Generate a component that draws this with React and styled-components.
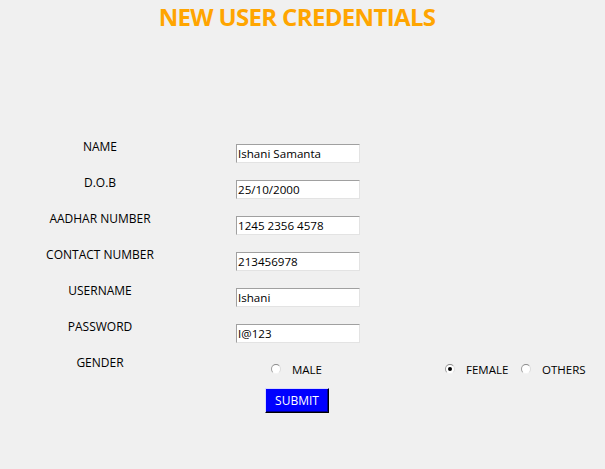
import React from 'react';
import styled, { createGlobalStyle } from 'styled-components'

const GlobalStyle = createGlobalStyle`
  body {
    margin: 0;
    background: #f0f0f0;
    font-family: "Open Sans", "Noto Sans", sans-serif;
  }
`

const Window = styled.div`
  width: 605px;
  height: 469px;
  background: #f0f0f0;
  overflow: hidden;
`

const Title = styled.h1`
  margin: 0;
  padding: 5px 11px 0 0;
  text-align: center;
  color: #ffa500;
  font-size: 24px;
  line-height: 24px;
  font-weight: 700;
  letter-spacing: -0.65px;
`

const Form = styled.div`
  display: grid;
  grid-template-columns: 200px 1fr;
  grid-template-rows: repeat(6, 36px) 33px auto;
  column-gap: 36px;
  margin-top: 110px;
`

const Label = styled.div`
  text-align: center;
  font-size: 12px;
  line-height: 16px;
  color: #000;
`

const Entry = styled.input`
  box-sizing: border-box;
  width: 124px;
  height: 19px;
  margin-top: 5px;
  padding: 0 1px;
  border: 1px solid;
  border-color: #a0a0a0 #e3e3e3 #e3e3e3 #a0a0a0;
  background: #fff;
  font-family: "Open Sans", "Noto Sans", sans-serif;
  font-size: 11.6px;
  color: #000;
  outline: none;
`

const RadioGroup = styled.div`
  display: grid;
  grid-template-columns: 174px 76px auto;
  padding: 8px 0 0 35px;
`

const Option = styled.label`
  display: flex;
  align-items: center;
  gap: 11px;
  height: 12px;
  font-size: 11.5px;
  color: #000;
`

const Circle = styled.span`
  box-sizing: border-box;
  width: 10px;
  height: 10px;
  border-radius: 50%;
  border: 1px solid;
  border-color: #8a8a8a #dcdcdc #f4f4f4 #9a9a9a;
  background: #fff;
  display: flex;
  align-items: center;
  justify-content: center;

  &::after {
    content: '';
    width: 4px;
    height: 4px;
    border-radius: 50%;
    background: ${props => props.checked ? '#000' : 'transparent'};
  }
`

const SubmitButton = styled.button`
  grid-column: 2;
  justify-self: start;
  margin-left: 29px;
  width: 64px;
  height: 25px;
  padding: 0;
  background: #0000ff;
  color: #fff;
  font-family: "Open Sans", "Noto Sans", sans-serif;
  font-size: 12px;
  border: 1px solid;
  border-color: #d8d8ff #000 #000 #d8d8ff;
  box-shadow: inset -1px -1px 0 #00008a;
  cursor: pointer;
`

const fields = [
  ['NAME', 'Ishani Samanta'],
  ['D.O.B', '25/10/2000'],
  ['AADHAR NUMBER', '1245 2356 4578'],
  ['CONTACT NUMBER', '213456978'],
  ['USERNAME', 'Ishani'],
  ['PASSWORD', 'I@123'],
]

const genders = ['MALE', 'FEMALE', 'OTHERS']

const App = () => {
  return (
    <Window>
      <GlobalStyle />
      <Title>NEW USER CREDENTIALS</Title>
      <Form>
        {fields.map(([label, value]) => (
          <React.Fragment key={label}>
            <Label>{label}</Label>
            <div><Entry readOnly value={value} /></div>
          </React.Fragment>
        ))}
        <Label>GENDER</Label>
        <RadioGroup>
          {genders.map(g => (
            <Option key={g}>
              <Circle checked={g === 'FEMALE'} />
              {g}
            </Option>
          ))}
        </RadioGroup>
        <SubmitButton>SUBMIT</SubmitButton>
      </Form>
    </Window>
  );
}

export default App;
